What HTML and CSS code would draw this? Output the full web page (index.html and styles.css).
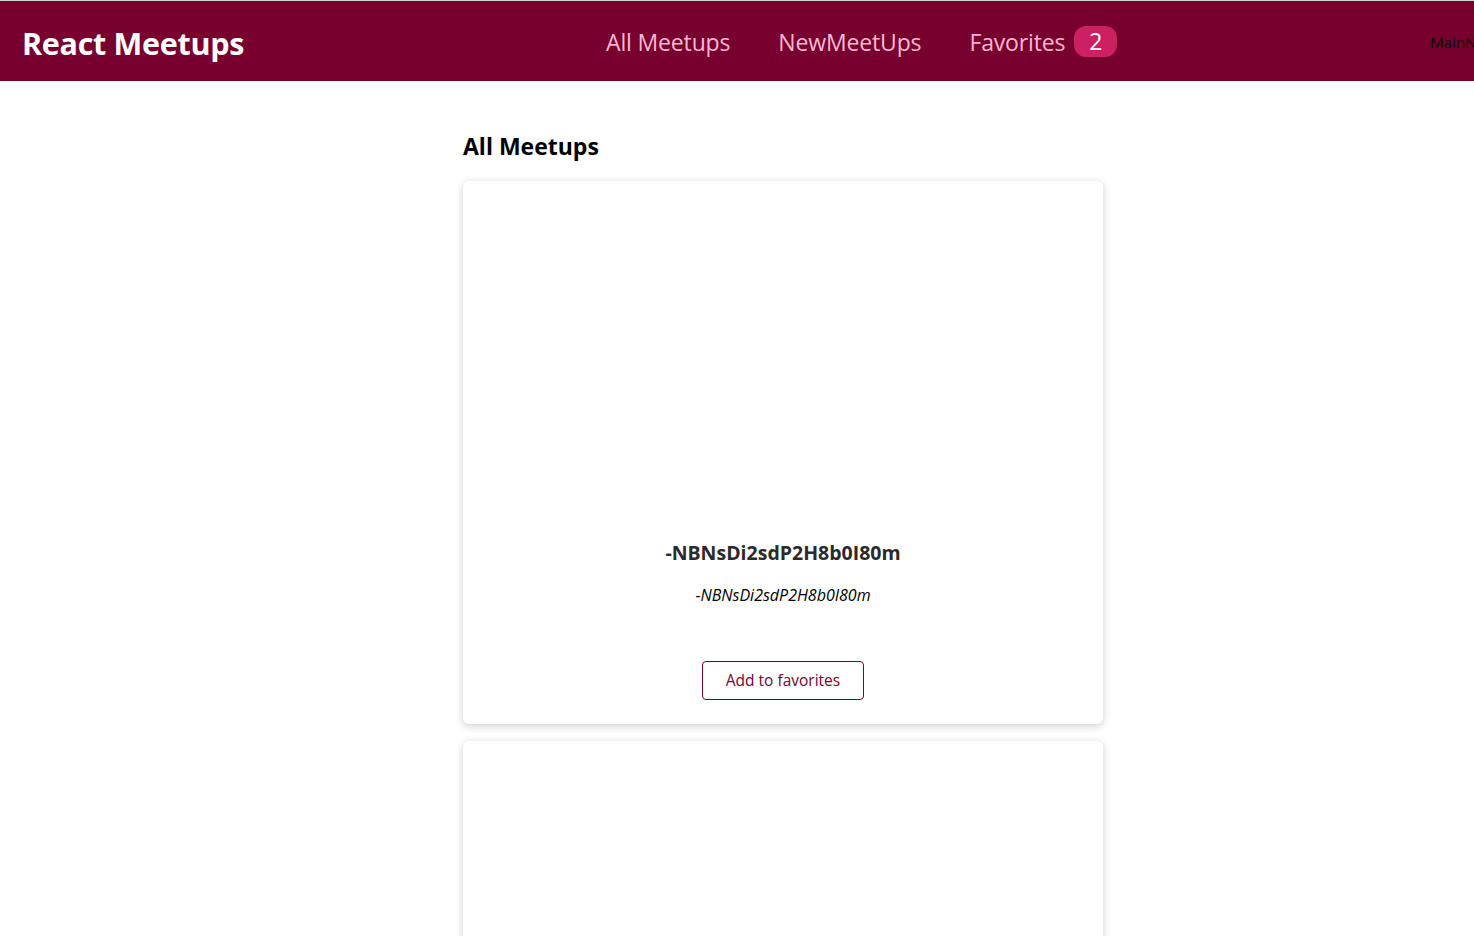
FILE: index.html
```html
<!DOCTYPE html>
<html lang="en">
<head>
<meta charset="utf-8">
<title>React Meetups</title>
<link rel="stylesheet" href="styles.css">
</head>
<body>
<header class="header">
  <div class="logo">React Meetups</div>
  <nav class="nav">
    <ul class="nav-list">
      <li><a href="#">All Meetups</a></li>
      <li><a href="#">NewMeetUps</a></li>
      <li><a href="#">Favorites <span class="badge">2</span></a></li>
    </ul>
  </nav>
  <div class="main-nav-label">MainNavigation</div>
</header>
<main class="main">
  <h1 class="page-title">All Meetups</h1>
  <ul class="list">
    <li class="item">
      <div class="card">
        <div class="image"></div>
        <div class="content">
          <h3>-NBNsDi2sdP2H8b0I80m</h3>
          <address>-NBNsDi2sdP2H8b0I80m</address>
          <p></p>
        </div>
        <div class="actions">
          <button class="fav-btn">Add to favorites</button>
        </div>
      </div>
    </li>
    <li class="item">
      <div class="card">
        <div class="image"></div>
        <div class="content">
          <h3>-NBNsDi2sdP2H8b0I80m</h3>
          <address>-NBNsDi2sdP2H8b0I80m</address>
          <p></p>
        </div>
        <div class="actions">
          <button class="fav-btn">Add to favorites</button>
        </div>
      </div>
    </li>
  </ul>
</main>
</body>
</html>
```
FILE: styles.css
```css
* { box-sizing: border-box; }
html, body {
  margin: 0;
  padding: 0;
  overflow-x: hidden;
}
body {
  font-family: "Open Sans", "Noto Sans", sans-serif;
  background: #fff;
  color: #000;
  width: 1474px;
}
.header {
  height: 81px;
  border-top: 1px solid #d4d4d4;
  background: #77002e;
  display: flex;
  align-items: center;
  padding: 3px 0 0 22px;
  white-space: nowrap;
}
.logo {
  font-size: 30.5px;
  font-weight: 700;
  color: #fff;
  width: 222px;
  letter-spacing: -0.3px;
  flex-shrink: 0;
}
.nav { margin-left: 362px; flex-shrink: 0; margin-top: -2px; }
.nav-list {
  list-style: none;
  margin: 0;
  padding: 0;
  display: flex;
  align-items: center;
  gap: 48px;
}
.nav-list a {
  text-decoration: none;
  color: #fcb8d2;
  font-size: 23px;
  display: flex;
  align-items: center;
  letter-spacing: -0.15px;
}
.badge {
  background: #cc2062;
  color: #fff;
  border-radius: 12px;
  padding: 0 15px;
  margin-left: 9px;
  line-height: 31px;
}
.main-nav-label {
  margin-left: 313px;
  font-size: 15px;
  color: #000;
  flex-shrink: 0;
  margin-top: -2px;
}
.main {
  width: 640px;
  margin-left: 463px;
  padding-top: 47px;
}
.page-title {
  margin: 0 0 17px;
  font-size: 23px;
  font-weight: 700;
  line-height: 36px;
}
.list {
  list-style: none;
  margin: 0;
  padding: 0;
  display: flex;
  flex-direction: column;
  gap: 17px;
}
.card {
  background: #fff;
  border-radius: 6px;
  box-shadow: 0 2px 8px rgba(0, 0, 0, 0.2);
  overflow: hidden;
}
.image {
  height: 320px;
}
.content {
  text-align: center;
  padding: 16px;
}
.content h3 {
  margin: 22px 0 19px;
  font-size: 19.5px;
  color: #2c292b;
  line-height: 27px;
}
.content address {
  font-style: italic;
  font-size: 16px;
  line-height: 21px;
}
.content p { margin: 15px 0; }
.actions {
  padding: 24px;
  text-align: center;
}
.fav-btn {
  font-family: inherit;
  font-size: 15.5px;
  line-height: 21px;
  color: #77002e;
  border: 1px solid #77002e;
  background: transparent;
  padding: 8px 23px;
  border-radius: 4px;
  cursor: pointer;
}
```
